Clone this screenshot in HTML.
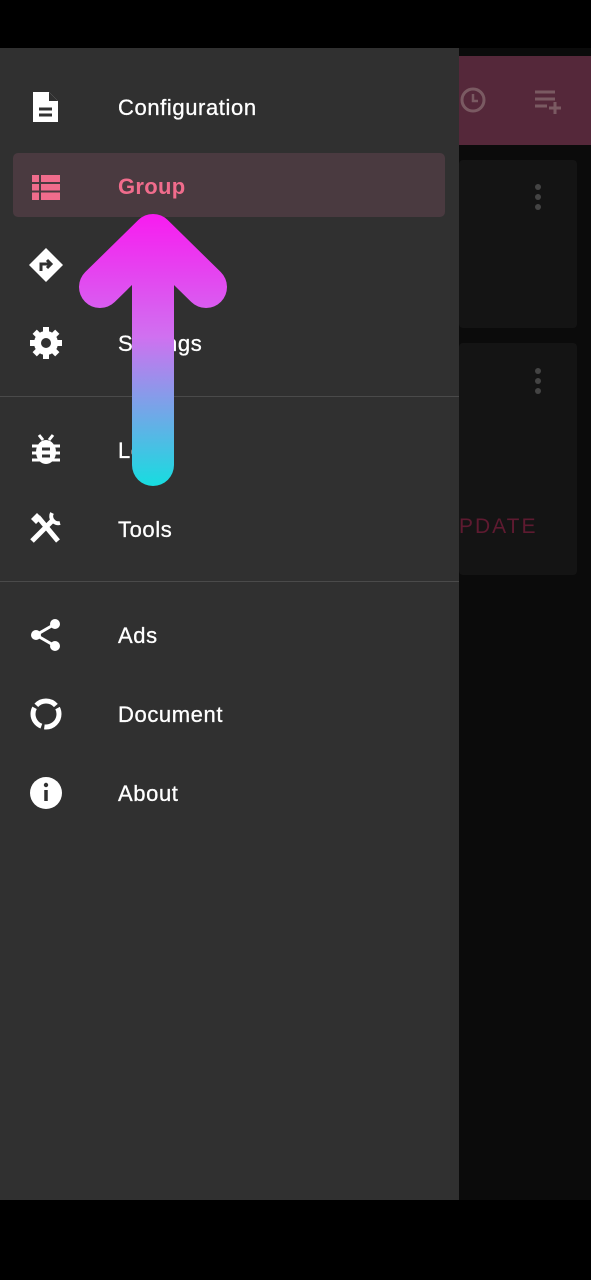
<!DOCTYPE html>
<html><head><style>
body{margin:0;width:591px;height:1280px;background:#000;position:relative;overflow:hidden;font-family:"Liberation Sans",sans-serif}
.abs{position:absolute}
.item{position:absolute;left:118px;color:#fff;font-size:22px;letter-spacing:0.6px;-webkit-text-stroke:0.3px #fff}
.ic{position:absolute;left:28px}
</style></head><body>
<div class="abs" style="left:459px;top:48px;width:132px;height:1152px;background:#0b0b0b"></div>
<div class="abs" style="left:459px;top:56px;width:132px;height:89px;background:#55283a"></div>
<div class="abs" style="left:459px;top:160px;width:118px;height:168px;background:#141414;border-radius:4px"></div>
<div class="abs" style="left:459px;top:343px;width:118px;height:232px;background:#141414;border-radius:4px"></div>
<div class="abs" style="left:459px;top:515px;color:#5e1a30;font-size:21px;letter-spacing:2px">PDATE</div>
<svg class="abs" style="left:455px;top:80px" width="130" height="40"><circle cx="18" cy="20" r="11" fill="none" stroke="#7a5a62" stroke-width="3"/><path d="M18 14v7h5" stroke="#7a5a62" stroke-width="2.5" fill="none"/><path d="M80 12h20M80 19h20M80 26h12M100 22v12M94 28h12" stroke="#7a5a62" stroke-width="3"/></svg>
<svg class="abs" style="left:532px;top:183px" width="12" height="30"><circle cx="6" cy="4" r="3" fill="#444"/><circle cx="6" cy="14" r="3" fill="#444"/><circle cx="6" cy="24" r="3" fill="#444"/></svg>
<svg class="abs" style="left:532px;top:367px" width="12" height="30"><circle cx="6" cy="4" r="3" fill="#444"/><circle cx="6" cy="14" r="3" fill="#444"/><circle cx="6" cy="24" r="3" fill="#444"/></svg>
<div class="abs" style="left:0;top:48px;width:459px;height:1152px;background:#303030"></div>
<div class="abs" style="left:13px;top:153px;width:432px;height:64px;background:#4a3a40;border-radius:5px"></div>
<div class="abs" style="left:0;top:396px;width:459px;height:1px;background:#4a4a4a"></div>
<div class="abs" style="left:0;top:581px;width:459px;height:1px;background:#4a4a4a"></div>

<svg class="ic" style="top:90px" width="36" height="36"><path d="M5 2h16l9 9v21H5z" fill="#fff"/><path d="M21 2v9h9" fill="#303030"/><path d="M11 19h13M11 25h13" stroke="#303030" stroke-width="3"/></svg>
<div class="item" style="top:95px">Configuration</div>
<svg class="ic" style="top:170px" width="36" height="36"><path d="M4 5h28v25H4z" fill="#f06c8c"/><path d="M4 13h28M4 21.5h28M12 5v25" stroke="#4a3a40" stroke-width="2"/></svg>
<div class="item" style="top:174px;color:#f06c8c;font-weight:700;-webkit-text-stroke:0;letter-spacing:0.3px">Group</div>
<svg class="ic" style="top:247px" width="36" height="36"><path d="M18 1l17 17-17 17L1 18z" fill="#fff"/><path d="M13 24v-7h9M19 13l4 4-4 4" stroke="#303030" stroke-width="3" fill="none"/></svg>
<svg class="ic" style="top:325px" width="36" height="36"><circle cx="18" cy="18" r="12" fill="#fff"/><g stroke="#fff" stroke-width="6"><path d="M18 2v32M2 18h32M6.7 6.7l22.6 22.6M29.3 6.7L6.7 29.3"/></g><circle cx="18" cy="18" r="5" fill="#303030"/></svg>
<div class="item" style="top:331px">Settings</div>
<svg class="ic" style="top:432px" width="36" height="36"><ellipse cx="18" cy="20" rx="10" ry="12" fill="#fff"/><path d="M4 14h28M4 21h28M4 28h28M11 3l4 5M25 3l-4 5" stroke="#fff" stroke-width="3"/><path d="M14 17h8M14 24h8" stroke="#303030" stroke-width="3"/></svg>
<div class="item" style="top:438px">Logs</div>
<svg class="ic" style="top:511px" width="36" height="36"><path d="M4 30L26 8M10 6l20 24" stroke="#fff" stroke-width="5"/><path d="M24 2a7 7 0 0 0 8 10" stroke="#fff" stroke-width="4" fill="none"/><path d="M3 8l6-6 5 5-6 6z" fill="#fff"/></svg>
<div class="item" style="top:517px">Tools</div>
<svg class="ic" style="top:617px" width="36" height="36"><circle cx="27" cy="7" r="5" fill="#fff"/><circle cx="8" cy="18" r="5" fill="#fff"/><circle cx="27" cy="29" r="5" fill="#fff"/><path d="M27 7L8 18l19 11" stroke="#fff" stroke-width="3" fill="none"/></svg>
<div class="item" style="top:623px">Ads</div>
<svg class="ic" style="top:696px" width="36" height="36"><circle cx="18" cy="18" r="13" fill="none" stroke="#fff" stroke-width="5" stroke-dasharray="22 3"/></svg>
<div class="item" style="top:702px">Document</div>
<svg class="ic" style="top:775px" width="36" height="36"><circle cx="18" cy="18" r="16" fill="#fff"/><path d="M18 15v11" stroke="#303030" stroke-width="3.5"/><circle cx="18" cy="10" r="2.2" fill="#303030"/></svg>
<div class="item" style="top:781px">About</div>

<svg class="abs" style="left:0;top:0" width="300" height="520">
<defs><linearGradient id="g" x1="0" y1="215" x2="0" y2="485" gradientUnits="userSpaceOnUse"><stop offset="0" stop-color="#f81cf0"/><stop offset="0.45" stop-color="#d070f0"/><stop offset="1" stop-color="#18dce0"/></linearGradient></defs>
<path d="M153 465V245M100 287l53-52 53 52" stroke="url(#g)" stroke-width="42" stroke-linecap="round" stroke-linejoin="round" fill="none"/>
</svg>
</body></html>
